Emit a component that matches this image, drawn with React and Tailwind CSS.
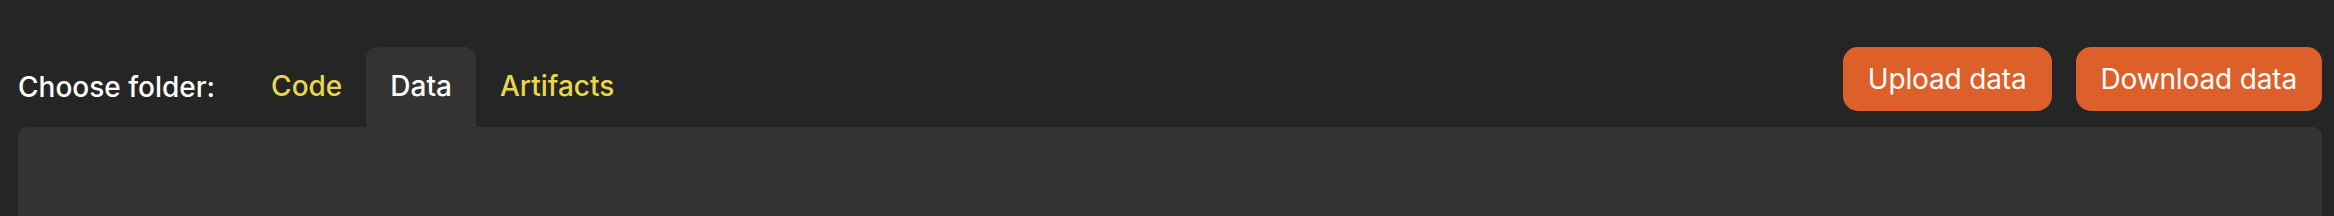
import { useState } from "react";

const folders = ["Code", "Data", "Artifacts"];

export default function App() {
    const [active, setActive] = useState("Data");

    return (
        <div className="h-screen overflow-hidden bg-[#252525] pl-[18px] pr-[12px] pt-[47px] font-['Inter',sans-serif] antialiased">
            <div className="flex items-start justify-between">
                {/* folder tabs */}
                <div className="flex items-center">
                    <span className="mr-[32px] text-[28px] font-medium leading-none text-white">
                        Choose folder:
                    </span>
                    <div className="flex">
                        {folders.map((name) => (
                            <button
                                key={name}
                                onClick={() => setActive(name)}
                                className={`flex h-[80px] items-center rounded-t-xl px-[24px] pb-[2px] text-[28px] font-medium leading-none ${
                                    active === name ? "bg-[#333333] text-white" : "text-[#e8d74c]"
                                }`}
                            >
                                {name}
                            </button>
                        ))}
                    </div>
                </div>

                {/* actions */}
                <div className="flex gap-[24px]">
                    <button className="h-[64px] rounded-[15px] bg-[#dd602a] px-[25px] text-[28px] leading-none tracking-[-0.15px] text-white">
                        Upload data
                    </button>
                    <button className="h-[64px] rounded-[15px] bg-[#dd602a] px-[25px] text-[28px] leading-none tracking-[-0.15px] text-white">
                        Download data
                    </button>
                </div>
            </div>

            <div className="h-[400px] rounded-[9px] bg-[#333333]"></div>
        </div>
    );
}
